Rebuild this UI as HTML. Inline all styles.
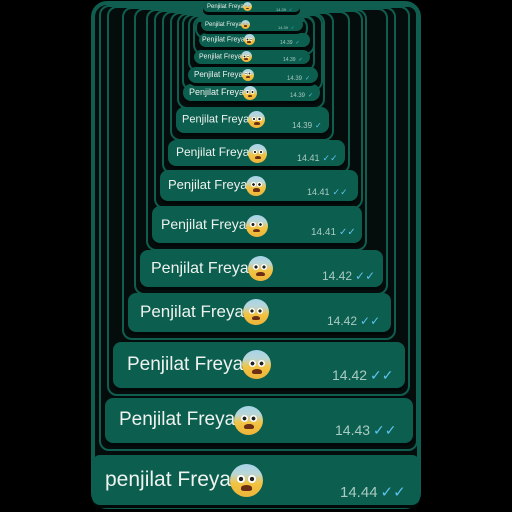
<!DOCTYPE html>
<html><head><meta charset="utf-8"><style>
html,body{margin:0;padding:0;background:#000;width:512px;height:512px;overflow:hidden;font-family:"Liberation Sans",sans-serif}
.f{position:absolute;background:#040d0c;border:2px solid #0f5e50;border-radius:10px;box-sizing:border-box}
.b{position:absolute;background:#0c5e4f;border-radius:8px;box-shadow:0 3px 0 #020807}
.t{position:absolute;color:#eef3ef;white-space:nowrap}
.tm{position:absolute;color:#a9cbc2;white-space:nowrap}
.tm i{font-style:normal;color:#5cc2ee;margin-left:3px}
.e{display:inline-block;border-radius:50%;background:linear-gradient(#a6d4ea 0%,#b9d6d6 30%,#f2c443 58%,#eeb43a 100%);vertical-align:middle;position:relative;margin-left:-1px}
.e:before,.e:after{content:"";position:absolute;top:32%;width:24%;height:24%;border-radius:50%;background-image:radial-gradient(circle,#222 35%,#fff 42%)}
.e:before{left:22%}.e:after{right:22%}
.e b{position:absolute;left:33%;top:64%;width:34%;height:17%;background:#6b2e14;border-radius:50% 50% 30% 30%}
</style></head><body>
<div id="r"></div>
<script>
var L=[
[92,455,420,505,105,21,340,"penjilat"],
[105,398,413,443,119,19,335],
[113,342,405,388,127,19,332],
[128,293,391,332,140,17,327],
[140,250,383,287,151,16,322],
[152,206,362,243,161,14,311],
[160,170,358,201,168,13,307],
[168,140,345,166,176,12,297],
[176,107,329,133,182,11,292],
[183,84,320,101,189,9,290],
[188,67,318,83,194,8,287],
[194,50,310,64,199,7,283],
[199,33,310,47,202,7,280],
[201,18,303,31,205,6,278],
[203,2,300,12,207,6,276]];
var times=["14.44","14.43","14.42","14.42","14.42","14.41","14.41","14.41","14.39","14.39","14.39","14.39","14.39","14.39","14.39"];
var h='<div class="f" style="left:91px;top:1px;width:330px;height:508px;border-width:4px;border-radius:16px"></div>';
for(var i=1;i<L.length;i++){var a=L[i];
 var fl=a[0]-6, fr=a[2]+5;
 h+='<div class="f" style="left:'+fl+'px;top:'+(4+i)+'px;width:'+(fr-fl)+'px;height:'+(a[3]+8-4-i)+'px"></div>';}
for(var i=0;i<L.length;i++){var a=L[i];var fs=a[5],hh=a[3]-a[1];
 h+='<div class="b" style="left:'+a[0]+'px;top:'+a[1]+'px;width:'+(a[2]-a[0])+'px;height:'+hh+'px"></div>';
 var es=Math.round(fs*1.55);
 h+='<div class="t" style="left:'+a[4]+'px;top:'+(a[1]+hh*0.5-fs*0.8)+'px;font-size:'+fs+'px;line-height:'+es+'px">'+(a[7]||"Penjilat")+' Freya<span class="e" style="width:'+es+'px;height:'+es+'px"><b></b></span></div>';
 var ts=Math.round(fs*0.72);
 h+='<div class="tm" style="left:'+a[6]+'px;top:'+(a[3]-ts-hh*0.15)+'px;font-size:'+ts+'px">'+times[i]+'<i>'+(i<8?'✓✓':'✓')+'</i></div>';}
document.getElementById("r").innerHTML=h;
</script>
</body></html>
